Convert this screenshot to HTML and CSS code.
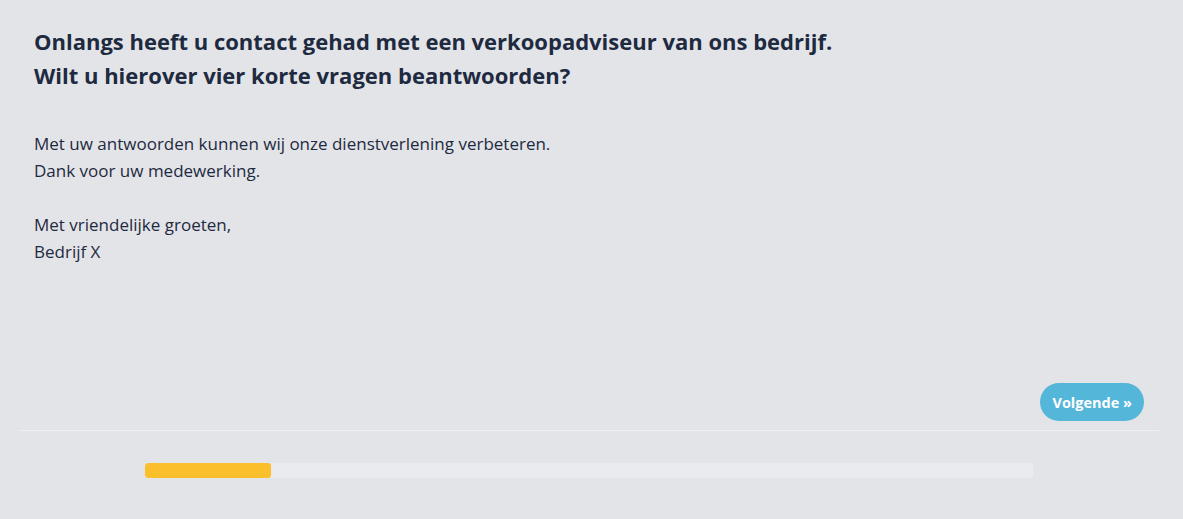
FILE: index.html
```html
<!DOCTYPE html>
<html lang="nl">
<head>
  <meta charset="UTF-8">
  <meta name="viewport" content="width=device-width, initial-scale=1.0">
  <title>Enquête - Bedrijf X</title>
  <link rel="stylesheet" href="styles.css">
</head>
<body>
  <div class="container">
    <div class="intro">
      <h1>Onlangs heeft u contact gehad met een verkoopadviseur van ons bedrijf.<br>Wilt u hierover vier korte vragen beantwoorden?</h1>
      <p>Met uw antwoorden kunnen wij onze dienstverlening verbeteren.<br>Dank voor uw medewerking.</p>
      <p>Met vriendelijke groeten,<br>Bedrijf X</p>
    </div>
    <div class="actions">
      <button class="next" type="button">Volgende &raquo;</button>
    </div>
    <div class="progress-row">
      <div class="progress">
        <div class="progress-bar" style="width: 14.2%"></div>
      </div>
    </div>
  </div>
</body>
</html>
```

FILE: styles.css
```css
body {
  background-color: #e3e4e8;
  color: #1e2a3f;
  font-family: "Open Sans", Lato, sans-serif;
  margin: 0;
  padding: 0;
}
.container {
  width: 1140px;
  margin-left: 19px;
}
.intro {
  padding: 24px 15px 0;
  height: 359px;
}
h1 {
  font-size: 22px;
  line-height: 34px;
  font-weight: 700;
  margin: 0 0 38px;
}
p {
  font-size: 17px;
  line-height: 27px;
  margin: 0 0 27px;
}
.actions {
  display: flex;
  justify-content: flex-end;
  padding: 0 15px 9px;
  border-bottom: 1px solid #eef0f2;
}
.next {
  background-color: #54b6d9;
  color: #ffffff;
  border: none;
  border-radius: 19px;
  height: 38px;
  padding: 0 12px;
  font-family: inherit;
  font-size: 14.5px;
  font-weight: 700;
  cursor: pointer;
}
.progress-row {
  display: flex;
  justify-content: center;
  padding: 32px 15px 0;
}
.progress {
  width: 80%;
  height: 15px;
  background-color: #e9ebee;
  border-radius: 3px;
  overflow: hidden;
}
.progress-bar {
  height: 100%;
  background-color: #fbbf2c;
  border-radius: 3px;
}
```
